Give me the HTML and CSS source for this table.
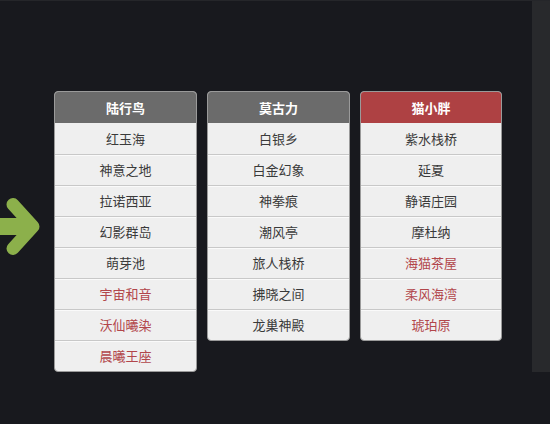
FILE: index.html
```html
<!DOCTYPE html>
<html lang="zh">
<head>
<meta charset="utf-8">
<link rel="stylesheet" href="styles.css">
</head>
<body>
<div class="page">
  <div class="arrow-col">
    <svg class="arrow" width="44" height="60" viewBox="0 0 44 60">
      <line x1="-6" y1="29.5" x2="28" y2="29.5" stroke="#8cb04b" stroke-width="17"/>
      <polyline points="13,7.5 33,29.5 13,51.5" fill="none" stroke="#8cb04b" stroke-width="13" stroke-linecap="round" stroke-linejoin="round"/>
    </svg>
  </div>
  <div class="card">
    <div class="head">陆行鸟</div>
    <div class="row">红玉海</div>
    <div class="row">神意之地</div>
    <div class="row">拉诺西亚</div>
    <div class="row">幻影群岛</div>
    <div class="row">萌芽池</div>
    <div class="row red">宇宙和音</div>
    <div class="row red">沃仙曦染</div>
    <div class="row red">晨曦王座</div>
  </div>
  <div class="card">
    <div class="head">莫古力</div>
    <div class="row">白银乡</div>
    <div class="row">白金幻象</div>
    <div class="row">神拳痕</div>
    <div class="row">潮风亭</div>
    <div class="row">旅人栈桥</div>
    <div class="row">拂晓之间</div>
    <div class="row">龙巢神殿</div>
  </div>
  <div class="card card-last">
    <div class="head head-red">猫小胖</div>
    <div class="row">紫水栈桥</div>
    <div class="row">延夏</div>
    <div class="row">静语庄园</div>
    <div class="row">摩杜纳</div>
    <div class="row red">海猫茶屋</div>
    <div class="row red">柔风海湾</div>
    <div class="row red">琥珀原</div>
  </div>
  <div class="side"></div>
</div>
</body>
</html>
```
FILE: styles.css
```css
html, body {
  margin: 0;
  padding: 0;
  background: #18191e;
  width: 550px;
  height: 424px;
  overflow: hidden;
}
.page {
  display: flex;
  align-items: flex-start;
  height: 424px;
  box-sizing: border-box;
  border-top: 1px solid #25262a;
  font-family: "Noto Sans CJK SC", "Noto Sans", sans-serif;
}
.arrow-col {
  width: 54px;
  flex: none;
  padding-top: 196px;
}
.arrow {
  display: block;
}
.card {
  flex: none;
  width: 143px;
  margin-top: 90px;
  margin-right: 10px;
  box-sizing: border-box;
  border: 1px solid #9a9a9a;
  border-radius: 4px;
  background: #efefef;
  overflow: hidden;
}
.card-last {
  width: 142px;
  margin-right: 0;
}
.head {
  height: 31px;
  line-height: 31px;
  text-align: center;
  background: #6b6b6b;
  color: #ffffff;
  font-weight: bold;
  font-size: 13px;
}
.head-red {
  background: #ae4143;
}
.row {
  height: 31px;
  line-height: 29px;
  box-sizing: border-box;
  border-top: 1px solid #c8c8c8;
  box-shadow: inset 0 1px 0 #fafafa;
  text-align: center;
  font-size: 13px;
  color: #3a3a3a;
}
.head + .row {
  border-top: none;
  box-shadow: none;
  line-height: 31px;
}
.red {
  color: #b2464b;
}
.side {
  margin-left: auto;
  width: 18px;
  height: 371px;
  background: #28292c;
  flex: none;
}
```
